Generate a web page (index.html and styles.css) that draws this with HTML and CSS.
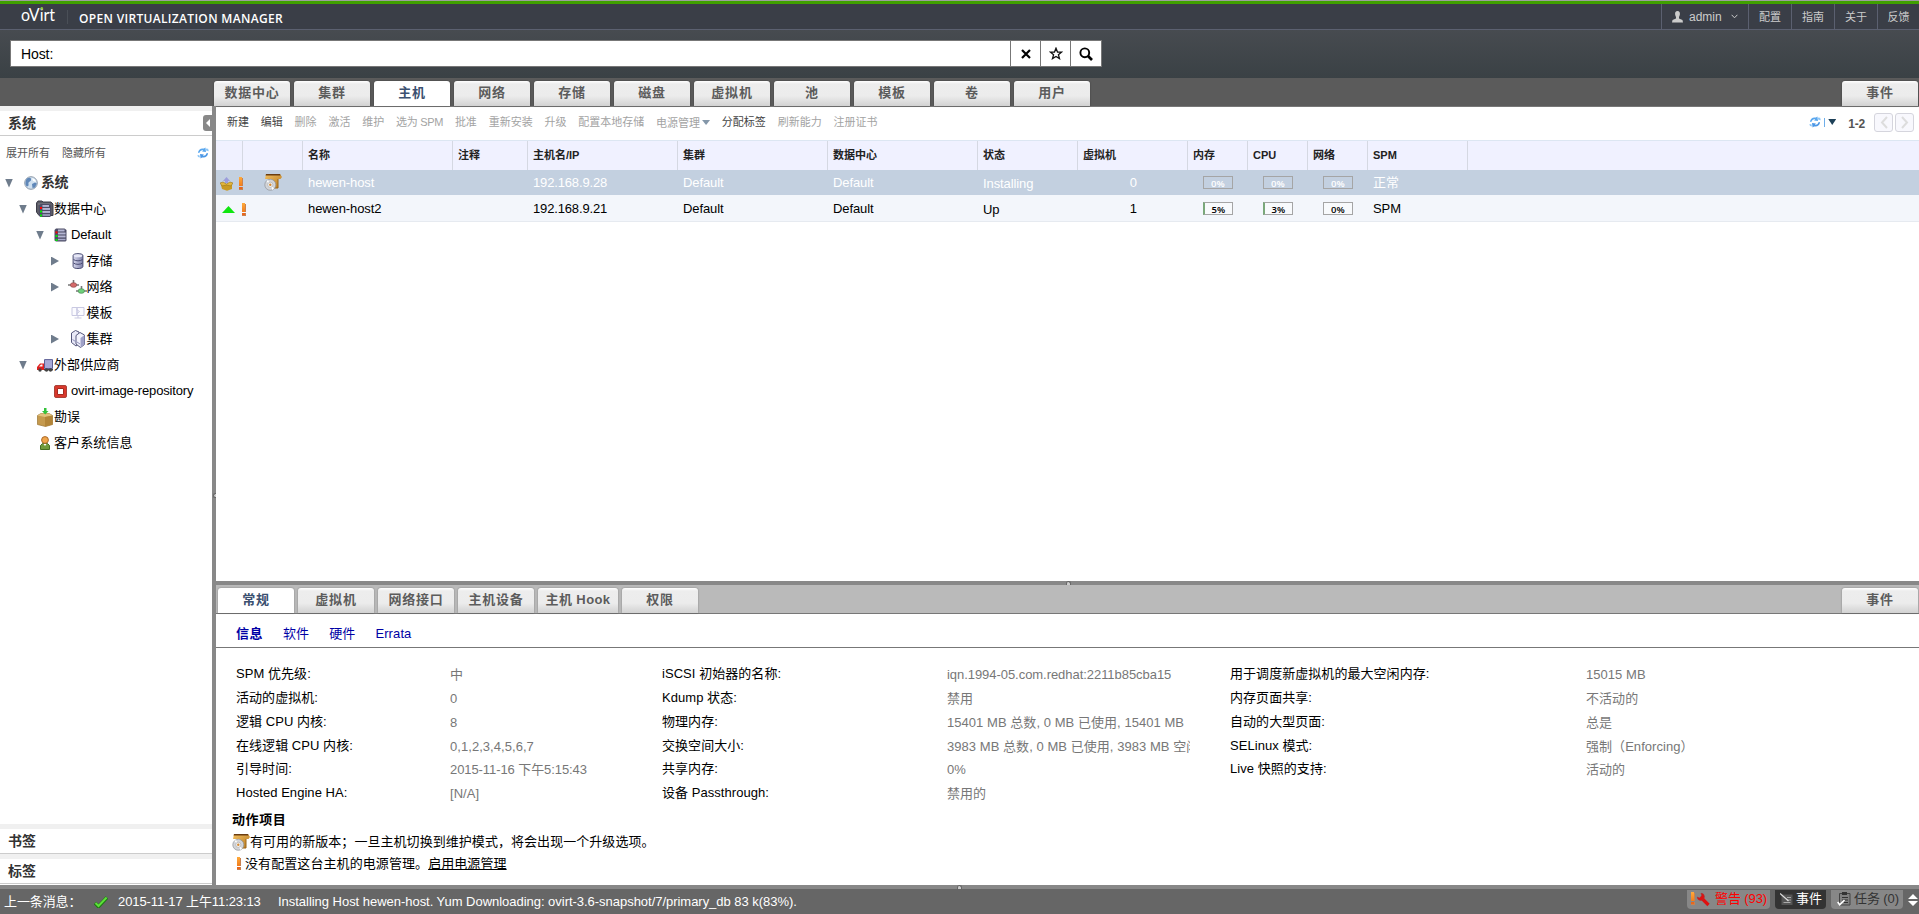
FILE: index.html
```html
<!DOCTYPE html>
<html lang="zh-CN">
<head>
<meta charset="utf-8">
<title>oVirt</title>
<link rel="stylesheet" href="styles.css">
</head>
<body>
<svg class="defs" width="0" height="0">
  <defs>
    <linearGradient id="gBox" x1="0" y1="0" x2="1" y2="1"><stop offset="0" stop-color="#f4c060"/><stop offset="1" stop-color="#b3761f"/></linearGradient>
    <linearGradient id="gOr" x1="0" y1="0" x2="0" y2="1"><stop offset="0" stop-color="#ffab3c"/><stop offset="1" stop-color="#f07c1c"/></linearGradient>
    <linearGradient id="gCyl" x1="0" y1="0" x2="1" y2="0"><stop offset="0" stop-color="#d8d9ee"/><stop offset="1" stop-color="#7d7fa8"/></linearGradient>
    <symbol id="excl" viewBox="0 0 6 14"><path d="M4 1h1v8H4zM4 10h1v3H1v-1h3z" fill="#c9814f"/><path d="M1 0h3v9H1z" fill="url(#gOr)"/><path d="M1 10h3v2H1z" fill="#e8661c"/></symbol>
    <symbol id="pkg" viewBox="0 0 18 18"><path d="M2 1h14l2 3-1.500 2H14v9H8V6H1z" fill="url(#gBox)"/><path d="M2 1h14l.6 1.600H1.600z" fill="#6b3d10"/><path d="M14 6v9h-4" stroke="#9c6415" fill="none"/><circle cx="6.300" cy="11.800" r="5.500" fill="#d3d5d9" stroke="#8f9297" stroke-width=".7"/><path d="M2.500 8.200l3.800 3.600L4 7z M10 15.400l-3.700-3.600L8.400 17z" fill="#fff"/><circle cx="6.300" cy="11.800" r="2.600" fill="#f4f4f4" stroke="#999" stroke-width=".5"/><circle cx="6.300" cy="11.800" r="1.200" fill="#d38a35"/></symbol>
    <symbol id="refresh" viewBox="0 0 12 12"><path d="M1 6C1 2.600 4 .8 7 1.600L8.400 .6 9 5 5 4.400 6.200 3.400C4.400 3 3 4 2.800 5.600z" fill="#5aa7ee"/><path d="M11 6C11 9.400 8 11.200 5 10.400L3.600 11.400 3 7 7 7.600 5.800 8.600C7.600 9 9 8 9.200 6.400z" fill="#4b97e6"/><path d="M8.500 1.500l2.600.2.700 2.600-2.400-.6zM.4 8l2 .2.600 2.400L1 10z" fill="#8cc6f7"/></symbol>
    <symbol id="rack" viewBox="0 0 13 14"><path d="M2 .500h8.500l2 1.500v10.500l-1 1H2l-1.500-1V2z" fill="#4d4d66"/><path d="M4 1.700h6.500v1.800H4zM4 4.700h7.500v1.800H4zM4 7.700h7.500v1.800H4zM4 10.700h7.500v1.600H4z" fill="#a9abcb"/><path d="M4 1.700h6.500v.6H4zM4 4.700h7.500v.6H4zM4 7.700h7.500v.6H4z" fill="#d5d6ea"/><path d="M1.500 3.400h2v2h-2z" fill="#f00"/><path d="M1.500 7h2v2h-2zM1.500 11h2v2h-2z" fill="#0e0"/></symbol>
  </defs>
</svg>
<div class="app">
  <header class="top">
    <svg class="logo" width="36" height="22" viewBox="0 0 36 22"><text x="0" y="17" class="logo-text" textLength="34" lengthAdjust="spacingAndGlyphs">oVirt</text><circle cx="20.800" cy="4.400" r="1.300" fill="#8ac53e"/></svg>
    <span class="logo-sep"></span>
    <span class="brand">OPEN VIRTUALIZATION MANAGER</span>
    <nav class="top-links">
      <span class="tl user"><svg width="11" height="12" viewBox="0 0 11 12"><path d="M5.500 0C7.400 0 8 1.400 7.900 3c0 1.600-.7 2.300-.9 3v1.500l3.500 1.500.5 2.500H0L.5 9 4 7.500V6c-.2-.7-.9-1.400-.9-3C3 1.400 3.600 0 5.500 0z" fill="#ccc"/></svg><span class="user-name">admin</span><svg width="7" height="5" viewBox="0 0 7 5"><path d="M.6.8l2.900 3 2.900-3" stroke="#ccc" fill="none"/></svg></span>
      <span class="tl">配置</span><span class="tl">指南</span><span class="tl">关于</span><span class="tl last">反馈</span>
    </nav>
  </header>
  <div class="search-area">
    <div class="search">
      <div class="search-input">Host:</div>
      <div class="sb"><svg width="10" height="10" viewBox="0 0 10 10"><path d="M1 1l8 8M9 1l-8 8" stroke="#000" stroke-width="2.200"/></svg></div>
      <div class="sb"><svg width="14" height="13" viewBox="0 0 14 13"><path d="M7 1.200l1.500 3.800 4 .2-3.100 2.500 1.100 3.900L7 9.400l-3.500 2.200 1.100-3.900L1.500 5.200l4-.2z" fill="none" stroke="#111" stroke-width="1.300"/></svg></div>
      <div class="sb sb-last"><svg width="14" height="14" viewBox="0 0 14 14"><circle cx="5.800" cy="5.800" r="4.400" fill="none" stroke="#000" stroke-width="1.900"/><path d="M9 9l4 4" stroke="#000" stroke-width="2.600"/></svg></div>
    </div>
  </div>
  <div class="tabs main-tabs">
    <span class="tab">数据中心</span><span class="tab">集群</span><span class="tab on">主机</span><span class="tab">网络</span><span class="tab">存储</span><span class="tab">磁盘</span><span class="tab">虚拟机</span><span class="tab">池</span><span class="tab">模板</span><span class="tab">卷</span><span class="tab">用户</span><span class="tab end">事件</span>
  </div>
  <div class="body">
    <aside class="side">
      <div class="side-head">系统<span class="collapse"><svg width="9" height="16" viewBox="0 0 9 16"><path d="M3 0h6v16H3Q0 16 0 13V3Q0 0 3 0z" fill="#888"/><path d="M7 4v8L3 8z" fill="#fff"/></svg></span></div>
      <div class="side-links"><span>展开所有</span><span>隐藏所有</span><svg class="side-refresh" width="12" height="12"><use href="#refresh"/></svg></div>
      <div class="tree">
        <div class="tr l0"><i class="dn"></i><svg width="14" height="14" viewBox="0 0 14 14"><circle cx="7" cy="7" r="6.300" fill="#cfe0f0" stroke="#8d99a8"/><path d="M3 2.500C5.500 1 7.500 2 7 4S4 5.500 4.500 8 3 11 2 9.500 1.500 4 3 2.500zM8 8l3-1.500 1.800 1L11 11.500 8.500 12z" fill="#5f87b8"/><path d="M8 2l3 1.500 1 2.500-3-1z" fill="#fff"/></svg><b>系统</b></div>
        <div class="tr l1"><i class="dn"></i><svg width="18" height="18" viewBox="0 0 18 18"><path d="M.5 3l1.500-2h4l1 1h8l2 2v11.500H3L.5 12z" fill="#5c5c66" stroke="#3c3c48"/><path d="M2 4h12" stroke="#85858f"/><use href="#rack" x="2.500" y="3.500" width="13" height="14"/></svg><span>数据中心</span></div>
        <div class="tr l2"><i class="dn"></i><svg width="13" height="14"><use href="#rack"/></svg><span>Default</span></div>
        <div class="tr l3"><i class="rt"></i><svg width="11" height="16" viewBox="0 0 11 16"><path d="M.6 2.500C.6 0 10.400 0 10.400 2.500v11c0 2.700-9.800 2.700-9.800 0z" fill="url(#gCyl)" stroke="#4b4d73"/><ellipse cx="5.500" cy="2.800" rx="4.200" ry="1.500" fill="#e6e7f6"/><path d="M1 6.500c2 1.800 7 1.800 9 0M1 10c2 1.800 7 1.800 9 0" stroke="#4b4d73" fill="none"/></svg><span>存储</span></div>
        <div class="tr l3 net"><i class="rt"></i><svg width="19" height="14" viewBox="0 0 19 14"><path d="M0 5h11M5.500 0v3M8 11h11M13.500 6v3" stroke="#777" stroke-width="1.600"/><ellipse cx="5.500" cy="5" rx="3.200" ry="2.300" fill="#d66a6a" stroke="#8f5050" stroke-width=".7"/><ellipse cx="13.300" cy="11" rx="3.200" ry="2.300" fill="#6fd07c" stroke="#4c8d55" stroke-width=".7"/></svg><span>网络</span></div>
        <div class="tr l3 tpl"><i></i><svg width="13" height="12" viewBox="0 0 13 12"><path d="M.5.500h5v8h-5zM5.500.500h7v8h-7zM3 11h7M6.500 8.500V11M5 2.500l3 2-3 2.500" fill="#fbfbff" stroke="#c9c9e2"/></svg><span>模板</span></div>
        <div class="tr l3"><i class="rt"></i><svg width="15" height="18" viewBox="0 0 15 18"><path d="M1 3l4-2.500L8.500 2v12l-3 2L1 12.500z" fill="#e9e9f8" stroke="#55577c"/><path d="M5.500 5.500l4-3L14 5v9.500l-4 3-4.500-3.500z" fill="#f2f2fd" stroke="#55577c"/><path d="M10 8l4-3v9.500l-4 3z" fill="#9fa1c8"/><path d="M2 9.500l3 2M6.500 12l3 2" stroke="#9092bb"/></svg><span>集群</span></div>
        <div class="tr l1"><i class="dn"></i><svg width="16" height="13" viewBox="0 0 16 13"><path d="M7.500.600h8v8.900h-8z" fill="#a7a9d8" stroke="#5d5f96"/><path d="M0 11V8l3-3.500h4V11z" fill="#e02020"/><path d="M2 7.500L4 5.500h1.500v2z" fill="#fff"/><path d="M7 10h9v1.500H7z" fill="#444"/><circle cx="3" cy="11" r="1.700" fill="#444"/><circle cx="9.500" cy="11" r="1.700" fill="#444"/><circle cx="13.500" cy="11" r="1.700" fill="#444"/></svg><span>外部供应商</span></div>
        <div class="tr l2"><i></i><svg width="13" height="13" viewBox="0 0 13 13"><rect x=".5" y=".5" width="12" height="12" rx="1.500" fill="#d9382c" stroke="#a94339"/><path d="M3.500 3.500h6v6h-6z" fill="#fff" stroke="#a52a20"/></svg><span class="repo">ovirt-image-repository</span></div>
        <div class="tr l1"><i></i><svg width="16" height="19" viewBox="0 0 16 19"><path d="M.5 7.500L4 5.500h8l3.500 2v9l-7 2-8-2z" fill="#c59a4e" stroke="#9b7430" stroke-width=".7"/><path d="M.5 7.500L8 9l7.500-1.500L12 5.500H4z" fill="#e2c27e"/><path d="M8 9v9.500l7.500-2v-9z" fill="#b38538"/><path d="M7 0h2.500v3h2L8.200 6.500 5 3h2z" fill="#33c23a"/></svg><span>勘误</span></div>
        <div class="tr l1"><i></i><svg width="16" height="14" viewBox="0 0 16 14"><path d="M3.500 13.500v-4l2-2h5l2 2v4z" fill="#6f9a3c" stroke="#476d22"/><circle cx="8" cy="4" r="3.400" fill="#f0a54a" stroke="#a9682a"/><path d="M6.500 8h3L8 10z" fill="#fff"/></svg><span>客户系统信息</span></div>
      </div>
      <div class="side-foot">书签</div>
      <div class="side-foot final">标签</div>
    </aside>
    <div class="vsplit"><i></i></div>
    <main class="main">
      <div class="toolbar">
        <span class="t on">新建</span><span class="t on">编辑</span><span class="t">删除</span><span class="t">激活</span><span class="t">维护</span><span class="t spm">选为 SPM</span><span class="t">批准</span><span class="t">重新安装</span><span class="t">升级</span><span class="t">配置本地存储</span><span class="t pm">电源管理<i class="dd"></i></span><span class="t on">分配标签</span><span class="t">刷新能力</span><span class="t">注册证书</span>
        <div class="pager"><svg width="12" height="12"><use href="#refresh"/></svg><i class="bar"></i><i class="dd dark"></i><b>1-2</b><span class="pg"><svg width="8" height="13" viewBox="0 0 8 13"><path d="M7 1L2 6.500 7 12" fill="none" stroke="#ddd" stroke-width="2"/></svg></span><span class="pg"><svg width="8" height="13" viewBox="0 0 8 13"><path d="M1 1l5 5.500L1 12" fill="none" stroke="#ddd" stroke-width="2"/></svg></span></div>
      </div>
      <div class="grid head"><span></span><span></span><span>名称</span><span>注释</span><span>主机名/IP</span><span>集群</span><span>数据中心</span><span>状态</span><span>虚拟机</span><span>内存</span><span>CPU</span><span>网络</span><span>SPM</span></div>
      <div class="grid row sel">
        <span class="st"><svg width="13" height="14" viewBox="0 0 13 14"><path d="M1 8h11v4l-5 1.700L2 12z" fill="#c99a22"/><path d="M0 6l3-1 3.500 2L10 5l3 1-2 3-4.500-1L2 9z" fill="#e2b53a" stroke="#9a7418" stroke-width=".6"/><path d="M6.500 0L10 4H8v2H5V4H3z" fill="#9b9ddc"/></svg><svg class="ex" width="6" height="14"><use href="#excl"/></svg></span>
        <span class="ic"><svg width="18" height="18"><use href="#pkg"/></svg></span>
        <span>hewen-host</span><span></span><span class="ip">192.168.9.28</span><span>Default</span><span>Default</span><span class="low">Installing</span><span class="num">0</span><span class="use"><em>0%</em></span><span class="use"><em>0%</em></span><span class="use"><em>0%</em></span><span>正常</span>
      </div>
      <div class="grid row alt">
        <span class="st up"><svg width="13" height="7" viewBox="0 0 13 7"><path d="M6.500 0L13 7H0z" fill="#0fe60f"/></svg><svg class="ex" width="6" height="14"><use href="#excl"/></svg></span>
        <span></span>
        <span>hewen-host2</span><span></span><span class="ip">192.168.9.21</span><span>Default</span><span>Default</span><span class="low">Up</span><span class="num">1</span><span class="use fill"><em>5%</em></span><span class="use fill"><em>3%</em></span><span class="use"><em>0%</em></span><span>SPM</span>
      </div>
      <div class="blank"></div>
      <div class="hsplit"><i></i></div>
      <div class="tabs sub-tabs">
        <span class="tab on">常规</span><span class="tab">虚拟机</span><span class="tab">网络接口</span><span class="tab">主机设备</span><span class="tab wide">主机 Hook</span><span class="tab">权限</span><span class="tab end">事件</span>
      </div>
      <div class="subnav"><b>信息</b><span>软件</span><span>硬件</span><span>Errata</span></div>
      <div class="details">
        <span>SPM 优先级:</span><em>中</em><span>iSCSI 初始器的名称:</span><em class="iqn">iqn.1994-05.com.redhat:2211b85cba15</em><span>用于调度新虚拟机的最大空闲内存:</span><em>15015 MB</em>
        <span>活动的虚拟机:</span><em>0</em><span>Kdump 状态:</span><em>禁用</em><span>内存页面共享:</span><em>不活动的</em>
        <span>逻辑 CPU 内核:</span><em>8</em><span>物理内存:</span><em>15401 MB 总数, 0 MB 已使用, 15401 MB</em><span>自动的大型页面:</span><em>总是</em>
        <span>在线逻辑 CPU 内核:</span><em>0,1,2,3,4,5,6,7</em><span>交换空间大小:</span><em>3983 MB 总数, 0 MB 已使用, 3983 MB 空闲</em><span>SELinux 模式:</span><em>强制（Enforcing）</em>
        <span>引导时间:</span><em class="boot">2015-11-16 下午5:15:43</em><span>共享内存:</span><em>0%</em><span>Live 快照的支持:</span><em>活动的</em>
        <span>Hosted Engine HA:</span><em>[N/A]</em><span>设备 Passthrough:</span><em>禁用的</em>
      </div>
      <div class="actions">
        <b>动作项目</b>
        <div class="a1"><svg width="18" height="18"><use href="#pkg"/></svg><span>有可用的新版本；一旦主机切换到维护模式，将会出现一个升级选项。</span></div>
        <div class="a2"><svg width="6" height="14"><use href="#excl"/></svg><span>没有配置这台主机的电源管理。<u>启用电源管理</u></span></div>
      </div>
    </main>
  </div>
  <div class="hsplit bottom"><i></i></div>
  <footer class="status">
    <span class="msg-label">上一条消息：</span>
    <svg class="ok" width="14" height="12" viewBox="0 0 14 12"><path d="M1 7l3.500 3.500L13 1.500" fill="none" stroke="#1a7a10" stroke-width="3.600"/><path d="M1.500 7l3 3L12.600 1.500" fill="none" stroke="#5ee03a" stroke-width="2"/></svg>
    <span class="time">2015-11-17 上午11:23:13</span>
    <span class="msg">Installing Host hewen-host. Yum Downloading: ovirt-3.6-snapshot/7/primary_db 83 k(83%).</span>
    <div class="ftabs">
      <span class="ft alert"><svg width="6" height="14"><use href="#excl"/></svg><svg class="wr" width="15" height="15" viewBox="0 0 15 15"><path d="M4.500 5l8 8" stroke="#e01010" stroke-width="3.200"/><path d="M5 1.200A3.600 3.600 0 1 1 1.200 5L3.500 6l2.300-2z" fill="#e01010" stroke="#a33" stroke-width=".6"/></svg><span>警告 (93)</span></span>
      <span class="ft ev"><svg width="13" height="13" viewBox="0 0 13 13"><path d="M1.500 1.500h11v10.500h-11z" fill="#555"/><path d="M7 4.500h4M7 7h4M3.500 9.500h7" stroke="#aaa"/><path d="M0 .5l8.500 7.500" stroke="#ddd" stroke-width="1.300"/></svg><span>事件</span></span>
      <span class="ft task"><svg width="14" height="14" viewBox="0 0 14 14"><path d="M2.500 1.500h10.500v11.500h-10.500z" fill="#808080" stroke="#444"/><path d="M5 0h5v3H5z" fill="#333"/><path d="M5 5.500h6M5 8h6M7 10.500h4" stroke="#333"/><path d="M.7 10l2 2.800L7.500 8" stroke="#fff" stroke-width="1.600" fill="none"/></svg><span>任务 (0)</span></span>
      <svg class="ud" width="10" height="12" viewBox="0 0 10 12"><path d="M5 0l5 5H0zM0 7h10l-5 5z" fill="#fff"/></svg>
    </div>
  </footer>
</div>
</body>
</html>
```
FILE: styles.css
```css
* { box-sizing: border-box; }
body { margin: 0; font: 13px/16px "Liberation Sans", "Noto Sans CJK SC", sans-serif; color: #000; letter-spacing: -.1px; white-space: nowrap; background: #fff; }
em, i { font-style: normal; }
svg { display: block; flex: none; }
.defs { position: absolute; }
.app { width: 1919px; height: 914px; display: flex; flex-direction: column; overflow: hidden; }

.top { height: 30px; flex: none; background: #3a3e47; border-top: 1px solid #9d9d9d; border-bottom: 1px solid #5b6070; box-shadow: inset 0 3px #40a000; display: flex; align-items: center; padding: 3px 0 0 21px; }
.logo { margin-top: -3px; overflow: visible; }
.logo-text { font: 17px/20px Lato, sans-serif; fill: #fff; letter-spacing: 0; }
.logo-sep { width: 1px; height: 14px; background: #4a4f57; margin: 0 11px 0 10px; }
.brand { font: 600 12px/16px "Open Sans", sans-serif; color: #fff; letter-spacing: .32px; margin-top: 4px; }
.top-links { margin-left: auto; display: flex; height: 25px; }
.tl { width: 43px; border-left: 1px solid #5b6070; color: #ccc; font-size: 11px; line-height: 27px; text-align: center; letter-spacing: 0; }
.tl.last { width: 42px; }
.tl.user { width: 87px; display: flex; align-items: center; padding-left: 10px; }
.user-name { font-size: 12px; margin: 1px 9px 0 6px; }

.search-area { height: 48px; flex: none; background: linear-gradient(#474b50, #3a4145); padding: 10px 0 0 10px; }
.search { display: flex; width: 1092px; height: 27px; border: 1px solid #777; background: #fff; }
.search-input { flex: 1; font-size: 14px; line-height: 26px; padding-left: 10px; }
.sb { width: 30px; border-left: 1px solid #777; display: flex; align-items: center; justify-content: center; }
.sb-last { width: 31px; }

.tabs { flex: none; display: flex; align-items: flex-end; gap: 4px; border-bottom: 1px solid #777; }
.main-tabs { height: 29px; background: #5b5b5b; padding-left: 214px; }
.tab { width: 76px; height: 25px; border-radius: 3px 3px 0 0; background: linear-gradient(#fff 0, #ededed 3px, #ececec 60%, #d2d2d2); color: #5c5c5c; font-weight: bold; letter-spacing: .8px; line-height: 24px; text-align: center; box-shadow: 0 0 2px rgba(0,0,0,.35); }
.tab.on { background: #fff; color: #3b5070; }
.tab.end { margin-left: auto; margin-right: 1px; }
.tab.wide { width: 80px; letter-spacing: .4px; }
.sub-tabs { height: 29px; background: #bababa; padding-left: 2px; }

.body { flex: 1; min-height: 0; display: flex; }
.side { width: 212px; margin-top: -1px; display: flex; flex-direction: column; }
.side-head { height: 30px; flex: none; border-top: 5px solid #f0f0f0; border-bottom: 1px solid #ccc; background: #fff; padding-left: 8px; font-weight: bold; font-size: 14px; line-height: 24px; color: #333; display: flex; align-items: center; }
.collapse { margin-left: auto; }
.side-links { display: flex; align-items: center; gap: 12px; height: 33px; flex: none; padding: 0 3px 0 6px; font-size: 11px; color: #555; letter-spacing: 0; }
.side-refresh { margin-left: auto; }
.tree { flex: 1; padding-top: 1px; letter-spacing: .1px; }
.tr { height: 26px; display: flex; align-items: center; }
.tr i { width: 8px; height: 9px; flex: none; }
.tr i.dn { background: #6f7c8c; clip-path: polygon(0 0, 100% 0, 50% 100%); }
.tr i.rt { background: #6f7c8c; clip-path: polygon(0 0, 100% 50%, 0 100%); }
.tr b { font-size: 14px; color: #333; margin: -2px 0 0 3px; letter-spacing: -.5px; }
.l0 { padding-left: 5px; } .l0 > svg { margin-left: 11px; }
.l1 { padding-left: 19px; } .l1 > svg { width: 18px; margin: 0 0 0 9px; }
.l2 { padding-left: 36px; letter-spacing: -.15px; } .l2 > svg { margin: 0 4px 0 10px; }
.l3 { padding-left: 51px; } .l3 > svg { width: 18px; margin: 0 0 0 9.5px; }
.net > svg { width: 19px; margin: 0 0 0 8.5px; }
.repo { letter-spacing: -.15px; }
.side-foot { height: 30px; flex: none; border-top: 5px solid #f0f0f0; border-bottom: 1px solid #ccc; padding-left: 8px; font-weight: bold; font-size: 14px; line-height: 24px; color: #333; }
.final { margin-bottom: 1px; }
.vsplit { width: 4px; margin-top: -1px; background: #888; padding-top: 387px; }
.vsplit i { display: block; width: 3px; height: 5px; margin-left: 1px; background: #ccc; border: 1px solid #666; border-right: 0; border-radius: 3px 0 0 3px; }
.main { flex: 1; min-width: 0; display: flex; flex-direction: column; }

.toolbar { height: 33px; flex: none; display: flex; align-items: center; gap: 11.8px; padding: 0 5px 3px 11px; font-size: 11px; letter-spacing: 0; color: #a3a3a3; }
.t.on { color: #444; }
.spm { letter-spacing: -.3px; }
.pm { display: flex; align-items: center; gap: 2px; margin-top: 1px; }
.dd { width: 8px; height: 5px; background: #8497a9; clip-path: polygon(0 0, 100% 0, 50% 100%); }
.dd.dark { background: #1d4058; height: 6px; margin: 0 12px 0 3px; }
.pager { margin-left: auto; display: flex; align-items: center; }
.pager b { font-size: 12px; color: #555; margin: 3px 7px 0 0; letter-spacing: -.2px; }
.bar { width: 1px; height: 9px; background: #6eaeea; margin-left: 3px; }
.pg { width: 19px; height: 19px; border: 1px solid #d5d5dd; border-radius: 3px; background: #f8f8fd; display: flex; align-items: center; justify-content: center; margin-left: 2px; }

.grid { display: grid; flex: none; grid-template-columns: 27px 60px 150px 75px 150px 150px 150px 100px 110px 60px 60px 60px 100px; }
.head { height: 30px; background: #f0f1ff; border-top: 1px solid #dce6f2; font-size: 11px; font-weight: bold; line-height: 29px; color: #222; letter-spacing: 0; }
.head span { border-right: 1px solid #d5d8e2; padding-left: 5px; }
.row { height: 25px; line-height: 25px; }
.row > span { padding-left: 5px; }
.sel { background: #c3d0e0; color: #fff; }
.alt { background: #f3f6fb; height: 27px; line-height: 27px; border-bottom: 1px solid #e6eaf0; }
.ip { letter-spacing: -.15px; }
.row .st { display: flex; align-items: center; padding: 2px 0 0 4px; }
.row .st.up { padding-left: 6px; }
.ex { margin-left: 5px; }
.up .ex { margin-left: 6px; }
.row .ic { padding: 3px 0 0 21px; }
.low { position: relative; top: 1px; }
.row .num { padding: 0 51px 0 0; text-align: right; }
.row .use { padding: 0 0 0 15px; display: flex; align-items: center; }
.use em { width: 30px; height: 13px; border: 1px solid #a5a5a5; font: 600 9.5px/13px "Open Sans", sans-serif; letter-spacing: .3px; text-align: center; }
.alt .use em { background: #f8fafc; }
.fill em { border-left: 2px solid #7aa87a; }
.blank { flex: 1; }
.hsplit { height: 4px; flex: none; background: #888; display: flex; padding-left: 850px; }
.hsplit i { width: 5px; height: 4px; border-radius: 3px 3px 0 0; background: #ccc; border: 1px solid #666; border-bottom: 0; }
.hsplit.bottom { padding-left: 957px; }

.subnav { height: 34px; flex: none; border-bottom: 1px solid #777; display: flex; align-items: center; gap: 20px; padding: 7px 0 0 20px; color: #0000a5; letter-spacing: .1px; }
.subnav b { letter-spacing: .5px; }
.details { flex: none; display: grid; grid-template-columns: 214px 212px 285px 283px 356px 200px; grid-auto-rows: 23.8px; padding: 14px 0 0 20px; line-height: 24px; letter-spacing: .05px; }
.details em { color: #777; padding-top: 1px; overflow: hidden; height: 25px; }
.details em:nth-child(6n+4) { width: 243px; }
.details .iqn { letter-spacing: -.05px; }
.details .boot { letter-spacing: -.08px; }
.actions { flex: none; height: 74px; padding-left: 16px; margin-top: 6px; letter-spacing: .08px; }
.actions b { display: block; line-height: 18px; letter-spacing: .6px; }
.actions div { display: flex; align-items: center; height: 22px; margin-top: 2px; }
.actions .a1 { letter-spacing: .05px; }
.actions .a2 { margin-top: 0; padding-left: 4px; gap: 3px; }

.status { height: 25px; flex: none; background: #666; color: #fff; display: flex; align-items: center; padding: 1px 0 0 4px; }
.msg-label { width: 90px; }
.time { margin-left: 10px; width: 160px; }
.msg { letter-spacing: -.03px; }
.ftabs { margin-left: auto; display: flex; height: 25px; }
.ft { height: 19px; background: #878787; border-radius: 0 0 4px 4px; display: flex; align-items: center; margin-right: 5px; }
.alert { width: 83px; color: #f00; padding-left: 3px; }
.wr { margin-right: 4px; }
.ev { width: 51px; background: #333; padding-left: 5px; gap: 3px; }
.task { width: 72px; color: #333; padding-left: 6px; gap: 3px; }
.ud { margin: 4px 1px 0 0; }
```
